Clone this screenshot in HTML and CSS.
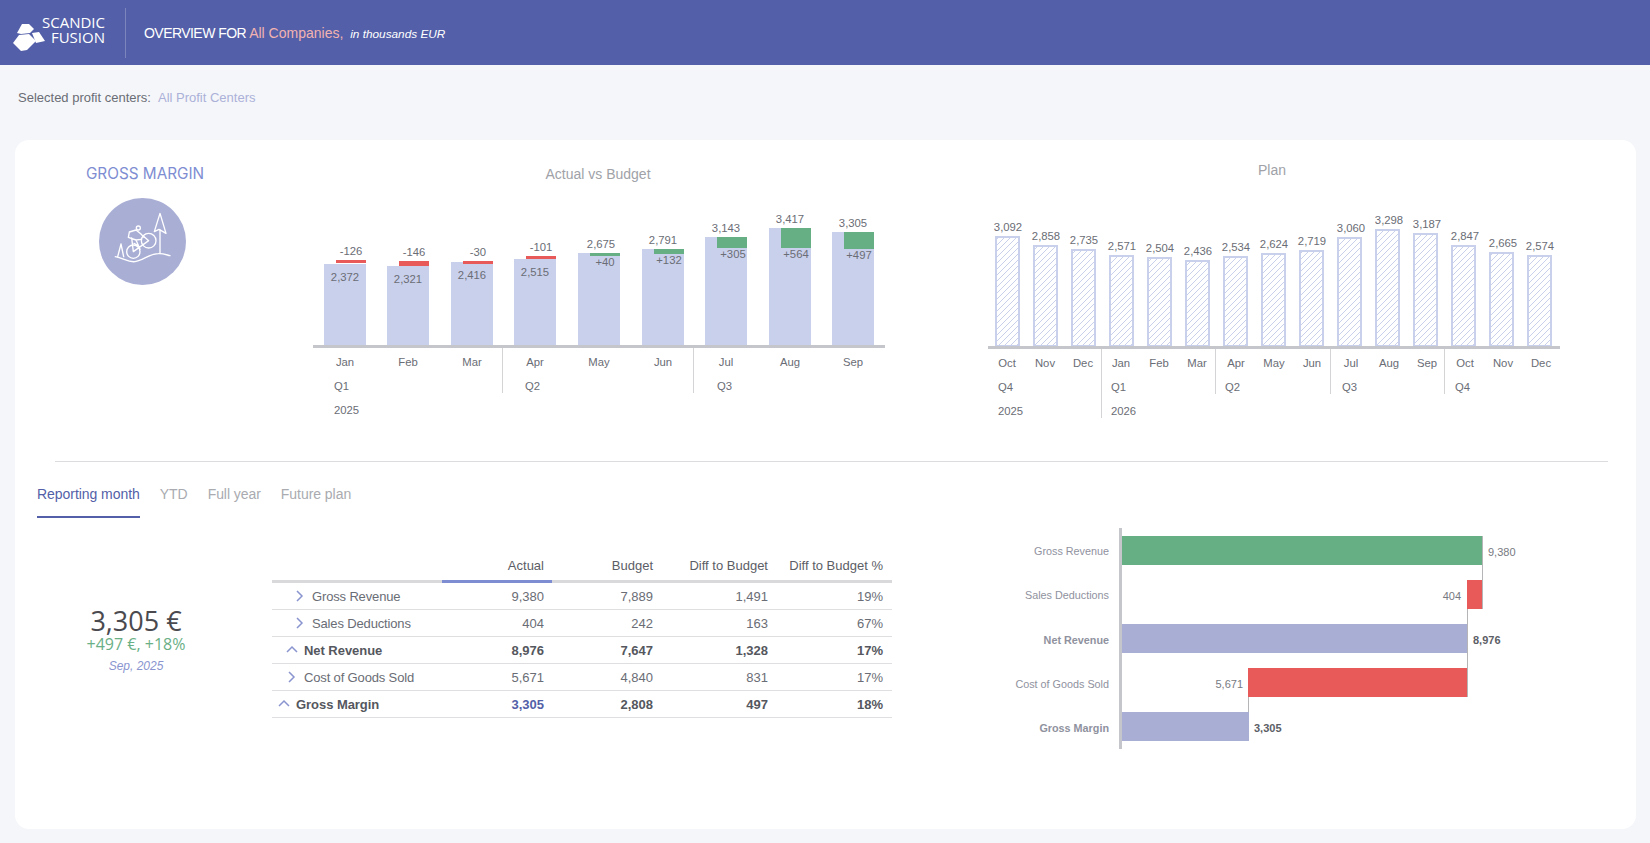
FILE: index.html
```html
<!DOCTYPE html>
<html lang="en">
<head>
<meta charset="utf-8">
<title>Gross Margin Overview</title>
<link rel="stylesheet" href="styles.css">
</head>
<body>
<header class="topbar">
  <div class="logo">
    <svg class="logo-mark" viewBox="0 0 48 56" aria-hidden="true">
      <polygon points="19,35 29,34 36,41 27,50 21,51 13,43"/>
      <polygon points="22,24 29,24 34,29 30,33 21,34 17,33"/>
      <polygon points="32,33 39,32 45,41 36,43"/>
    </svg>
    <div class="logo-text"><span>SCANDIC</span><span>FUSION</span></div>
  </div>
  <div class="title"><span class="title-main">OVERVIEW FOR</span> <span class="title-accent">All Companies,</span> <em class="title-unit">in thousands EUR</em></div>
</header>

<div class="filter"><span>Selected profit centers:</span><span class="filter-value">All Profit Centers</span></div>

<main class="card">
  <section class="top">
    <div class="identity">
      <h2 class="identity-title">GROSS MARGIN</h2>
      <svg class="identity-icon" viewBox="117 144 261 261" aria-hidden="true">
        <circle cx="247.5" cy="274.5" r="130.5" fill="#a9aed5"/>
        <g fill="none" stroke="#fff" stroke-width="4" stroke-linecap="round" stroke-linejoin="round">
          <path d="M166 320 C190 324 205 338 225 335 C250 330 268 312 295 311 C308 310 318 314 330 317"/>
          <path d="M300 190 L283 245 L297 238 L318 250 Z"/>
          <path d="M300 240 V310"/>
          <path d="M183 282 L173 320 M183 282 L191 320"/>
          <circle cx="220" cy="305" r="20"/>
          <circle cx="266" cy="272" r="22"/>
          <circle cx="235" cy="234" r="6"/>
          <path d="M208 246 L228 240 L243 252 L252 262 M208 246 L205 262 L228 270 L240 298 M215 264 L220 305 L266 272 L250 258 M228 270 L244 268 M222 280 L240 290"/>
        </g>
      </svg>
    </div>

    <figure class="chart chart-actual">
      <figcaption class="chart-title">Actual vs Budget</figcaption>
      <svg class="chart-svg-actual" viewBox="296 184 604 240">
        <g class="bar-base">
          <rect x="324" y="264" width="42" height="81"/>
          <rect x="387" y="266" width="42" height="79"/>
          <rect x="451" y="262" width="42" height="83"/>
          <rect x="514" y="259" width="42" height="86"/>
          <rect x="578" y="253" width="42" height="92"/>
          <rect x="642" y="249" width="42" height="96"/>
          <rect x="705" y="237" width="42" height="108"/>
          <rect x="769" y="228" width="42" height="117"/>
          <rect x="832" y="232" width="42" height="113"/>
        </g>
        <g class="bar-neg">
          <rect x="336" y="260" width="30" height="3"/>
          <rect x="399" y="261" width="30" height="5"/>
          <rect x="463" y="261" width="30" height="3"/>
          <rect x="526" y="256" width="30" height="3"/>
        </g>
        <g class="bar-pos">
          <rect x="590" y="253" width="30" height="3"/>
          <rect x="654" y="249" width="30" height="5"/>
          <rect x="717" y="237" width="30" height="11"/>
          <rect x="781" y="228" width="30" height="20"/>
          <rect x="844" y="232" width="30" height="17"/>
        </g>
        <rect class="axis" x="313" y="345" width="572" height="3"/>
        <g class="sep">
          <line x1="502.5" y1="348" x2="502.5" y2="393"/>
          <line x1="693.5" y1="348" x2="693.5" y2="393"/>
        </g>
        <g class="lbl">
          <text x="351" y="251">-126</text><text x="414" y="252">-146</text><text x="478" y="252">-30</text><text x="541" y="247">-101</text>
          <text x="601" y="244">2,675</text><text x="663" y="240">2,791</text><text x="726" y="228">3,143</text><text x="790" y="219">3,417</text><text x="853" y="223">3,305</text>
          <text x="345" y="277">2,372</text><text x="408" y="279">2,321</text><text x="472" y="275">2,416</text><text x="535" y="272">2,515</text>
          <text x="605" y="262">+40</text><text x="669" y="260">+132</text><text x="733" y="254">+305</text><text x="796" y="254">+564</text><text x="859" y="255">+497</text>
          <text x="345" y="362">Jan</text><text x="408" y="362">Feb</text><text x="472" y="362">Mar</text><text x="535" y="362">Apr</text><text x="599" y="362">May</text><text x="663" y="362">Jun</text><text x="726" y="362">Jul</text><text x="790" y="362">Aug</text><text x="853" y="362">Sep</text>
        </g>
        <g class="lbl-start">
          <text x="334" y="386">Q1</text><text x="525" y="386">Q2</text><text x="717" y="386">Q3</text><text x="334" y="410">2025</text>
        </g>
      </svg>
    </figure>

    <figure class="chart chart-plan">
      <figcaption class="chart-title">Plan</figcaption>
      <svg class="chart-svg-plan" viewBox="980 180 584 244">
        <defs>
          <pattern id="hatch" patternUnits="userSpaceOnUse" width="6" height="6">
            <path d="M-1 1 L1 -1 M0 6 L6 0 M5 7 L7 5" stroke="#c9d0ec" stroke-width="1"/>
          </pattern>
        </defs>
        <g class="bar-plan">
          <rect x="996" y="237" width="23" height="109"/>
          <rect x="1034" y="246" width="23" height="100"/>
          <rect x="1072" y="250" width="23" height="96"/>
          <rect x="1110" y="256" width="23" height="90"/>
          <rect x="1148" y="258" width="23" height="88"/>
          <rect x="1186" y="261" width="23" height="85"/>
          <rect x="1224" y="257" width="23" height="89"/>
          <rect x="1262" y="254" width="23" height="92"/>
          <rect x="1300" y="251" width="23" height="95"/>
          <rect x="1338" y="238" width="23" height="108"/>
          <rect x="1376" y="230" width="23" height="116"/>
          <rect x="1414" y="234" width="23" height="112"/>
          <rect x="1452" y="246" width="23" height="100"/>
          <rect x="1490" y="253" width="23" height="93"/>
          <rect x="1528" y="256" width="23" height="90"/>
        </g>
        <rect class="axis" x="988" y="346" width="572" height="3"/>
        <g class="sep">
          <line x1="1101.5" y1="349" x2="1101.5" y2="418"/>
          <line x1="1215.5" y1="349" x2="1215.5" y2="394"/>
          <line x1="1330.5" y1="349" x2="1330.5" y2="394"/>
          <line x1="1444.5" y1="349" x2="1444.5" y2="394"/>
        </g>
        <g class="lbl">
          <text x="1008" y="227">3,092</text><text x="1046" y="236">2,858</text><text x="1084" y="240">2,735</text><text x="1122" y="246">2,571</text><text x="1160" y="248">2,504</text><text x="1198" y="251">2,436</text><text x="1236" y="247">2,534</text><text x="1274" y="244">2,624</text><text x="1312" y="241">2,719</text><text x="1351" y="228">3,060</text><text x="1389" y="220">3,298</text><text x="1427" y="224">3,187</text><text x="1465" y="236">2,847</text><text x="1503" y="243">2,665</text><text x="1540" y="246">2,574</text>
          <text x="1007" y="363">Oct</text><text x="1045" y="363">Nov</text><text x="1083" y="363">Dec</text><text x="1121" y="363">Jan</text><text x="1159" y="363">Feb</text><text x="1197" y="363">Mar</text><text x="1236" y="363">Apr</text><text x="1274" y="363">May</text><text x="1312" y="363">Jun</text><text x="1351" y="363">Jul</text><text x="1389" y="363">Aug</text><text x="1427" y="363">Sep</text><text x="1465" y="363">Oct</text><text x="1503" y="363">Nov</text><text x="1541" y="363">Dec</text>
        </g>
        <g class="lbl-start">
          <text x="998" y="387">Q4</text><text x="1111" y="387">Q1</text><text x="1225" y="387">Q2</text><text x="1342" y="387">Q3</text><text x="1455" y="387">Q4</text>
          <text x="998" y="411">2025</text><text x="1111" y="411">2026</text>
        </g>
      </svg>
    </figure>
  </section>

  <hr class="divider">

  <nav class="tabs">
    <a class="tab tab-active">Reporting month</a>
    <a class="tab">YTD</a>
    <a class="tab">Full year</a>
    <a class="tab">Future plan</a>
  </nav>

  <section class="bottom">
    <div class="kpi">
      <div class="kpi-value">3,305 €</div>
      <div class="kpi-delta">+497 €, +18%</div>
      <div class="kpi-date">Sep, 2025</div>
    </div>

    <table class="grid">
      <colgroup><col class="c-label"><col class="c-actual"><col class="c-budget"><col class="c-diff"><col class="c-pct"></colgroup>
      <thead>
        <tr><th></th><th class="th-actual">Actual</th><th>Budget</th><th>Diff to Budget</th><th class="pct">Diff to Budget %</th></tr>
      </thead>
      <tbody>
        <tr>
          <td><div class="row-label lvl-2"><svg class="chev" viewBox="0 0 12 12"><path d="M3 1 L8 6 L3 11"/></svg>Gross Revenue</div></td>
          <td>9,380</td><td>7,889</td><td>1,491</td><td class="pct">19%</td>
        </tr>
        <tr>
          <td><div class="row-label lvl-2"><svg class="chev" viewBox="0 0 12 12"><path d="M3 1 L8 6 L3 11"/></svg>Sales Deductions</div></td>
          <td>404</td><td>242</td><td>163</td><td class="pct">67%</td>
        </tr>
        <tr class="strong">
          <td><div class="row-label lvl-1"><svg class="chev" viewBox="0 0 12 12"><path d="M1 8 L6 3 L11 8"/></svg>Net Revenue</div></td>
          <td>8,976</td><td>7,647</td><td>1,328</td><td class="pct">17%</td>
        </tr>
        <tr>
          <td><div class="row-label lvl-1"><svg class="chev" viewBox="0 0 12 12"><path d="M3 1 L8 6 L3 11"/></svg>Cost of Goods Sold</div></td>
          <td>5,671</td><td>4,840</td><td>831</td><td class="pct">17%</td>
        </tr>
        <tr class="strong">
          <td><div class="row-label lvl-0"><svg class="chev" viewBox="0 0 12 12"><path d="M1 8 L6 3 L11 8"/></svg>Gross Margin</div></td>
          <td class="accent">3,305</td><td>2,808</td><td>497</td><td class="pct">18%</td>
        </tr>
      </tbody>
    </table>

    <svg class="bridge" viewBox="1000 520 600 240">
      <g class="connector">
        <line x1="1482.5" y1="536" x2="1482.5" y2="609"/>
        <line x1="1467.5" y1="609" x2="1467.5" y2="697"/>
        <line x1="1248.5" y1="697" x2="1248.5" y2="712"/>
      </g>
      <rect class="fill-pos" x="1121" y="536" width="361" height="29"/>
      <rect class="fill-neg" x="1467" y="580" width="15" height="29"/>
      <rect class="fill-total" x="1121" y="624" width="346" height="29"/>
      <rect class="fill-neg" x="1248" y="668" width="219" height="29"/>
      <rect class="fill-total" x="1121" y="712" width="128" height="29"/>
      <rect class="axis" x="1119" y="528" width="3" height="221"/>
      <g class="cat">
        <text x="1109" y="551">Gross Revenue</text>
        <text x="1109" y="595">Sales Deductions</text>
        <text class="b" x="1109" y="640">Net Revenue</text>
        <text x="1109" y="684">Cost of Goods Sold</text>
        <text class="b" x="1109" y="728">Gross Margin</text>
      </g>
      <g class="val">
        <text x="1488" y="552">9,380</text>
        <text class="end" x="1461" y="596">404</text>
        <text class="b" x="1473" y="640">8,976</text>
        <text class="end" x="1243" y="684">5,671</text>
        <text class="b" x="1254" y="728">3,305</text>
      </g>
    </svg>
  </section>
</main>
</body>
</html>
```
FILE: styles.css
```css
* { box-sizing: border-box; }
html, body { margin: 0; padding: 0; }
body {
  background: #f5f6fa;
  font-family: "Liberation Sans", Arial, sans-serif;
  color: #5c5e66;
  height: 843px;
  overflow: hidden;
}
.topbar {
  height: 65px;
  background: #535fa8;
  display: flex;
  align-items: center;
  color: #fff;
}
.logo {
  width: 126px;
  height: 50px;
  display: flex;
  border-right: 1px solid #7c86bd;
  margin-top: 1px;
}
.logo-mark { width: 48px; height: 56px; fill: #fff; margin-top: -8px; flex: none; }
.logo-text {
  display: flex;
  flex-direction: column;
  align-items: flex-end;
  font-family: "Open Sans", sans-serif;
  font-size: 15px;
  font-weight: 500;
  line-height: 15px;
  width: 57px;
  margin-top: 7px;
  white-space: nowrap;
}
.title { margin-left: 18px; font-size: 14px; white-space: nowrap; }
.title-main { letter-spacing: -0.55px; }
.title-accent { color: #f2b3b0; }
.title-unit { font-size: 11.8px; margin-left: 3px; }

.filter {
  height: 75px;
  padding: 0 18px 10px;
  display: flex;
  gap: 7px;
  align-items: center;
  font-size: 13px;
  color: #6a6d75;
}
.filter-value { color: #abb1d8; }

.card {
  margin: 0 14px 0 15px;
  height: 689px;
  background: #fff;
  border-radius: 14px;
}
.top { height: 321px; display: flex; }
.identity {
  width: 255px;
  flex: none;
  padding-top: 24px;
  display: flex;
  flex-direction: column;
  align-items: center;
}
.identity-title {
  margin: 0 0 14px 5px;
  font-family: Inter, sans-serif;
  font-size: 15.3px;
  line-height: 20px;
  font-weight: 400;
  color: #7e8dd2;
  white-space: nowrap;
}
.identity-icon { width: 87px; height: 87px; }

.chart { margin: 0; flex: none; }
.chart-actual { margin-left: 26px; width: 604px; padding-top: 24px; }
.chart-plan { margin-left: 80px; width: 584px; padding-top: 20px; }
.chart-title {
  text-align: center;
  font-size: 14px;
  line-height: 20px;
  color: #a0a2a8;
}
.chart-svg-actual { display: block; width: 604px; height: 240px; }
.chart-svg-plan { display: block; width: 584px; height: 244px; }

.bar-base rect { fill: #c9d0ec; }
.bar-neg rect { fill: #e85a5a; }
.bar-pos rect { fill: #66af85; }
.bar-plan rect { fill: url(#hatch); stroke: #c9d0ec; stroke-width: 2; }
.axis { fill: #c5c6cc; }
.sep line { stroke: #d4d4d6; stroke-width: 1; }
.lbl, .lbl-start, .cat, .val { transform: translateY(1px); }
.lbl text, .lbl-start text, .cat text, .val text {
  font-family: "Liberation Sans", Arial, sans-serif;
  font-size: 11.3px;
  dominant-baseline: middle;
  fill: #6a6d75;
}
.lbl text { text-anchor: middle; }
.lbl-start text { text-anchor: start; }
.cat text { text-anchor: end; fill: #8f929e; font-size: 10.8px; }
.val text { font-size: 11px; fill: #777a82; }
.cat .b, .val .b { font-weight: 700; }
.val .b { fill: #5c5e66; }
.val .end { text-anchor: end; }
.fill-pos { fill: #66af85; }
.fill-neg { fill: #e85a5a; }
.fill-total { fill: #a9aed5; }
.connector line { stroke: #b5b5b8; stroke-width: 1; }

.divider {
  margin: 0 28px 0 40px;
  height: 1px;
  border: 0;
  background: #dcdcdf;
}
.tabs {
  display: flex;
  gap: 20px;
  margin-top: 22px;
  padding-left: 22px;
  font-size: 14px;
}
.tab {
  line-height: 20px;
  padding-bottom: 12px;
  border-bottom: 2px solid transparent;
  color: #a9abb0;
  letter-spacing: -0.05px;
}
.tab-active { color: #535fa8; border-bottom-color: #535fa8; }

.bottom { display: flex; padding-top: 2px; }
.kpi {
  width: 242px;
  flex: none;
  padding-top: 85px;
  text-align: center;
}
.kpi-value {
  font-family: "Open Sans", sans-serif;
  font-size: 27px;
  line-height: 31px;
  color: #4a4a4f;
}
.kpi-delta {
  margin-top: -1px;
  font-family: "Open Sans", sans-serif;
  font-size: 16px;
  line-height: 18px;
  color: #6aaf85;
}
.kpi-date {
  margin-top: 6px;
  font-size: 12px;
  line-height: 14px;
  font-style: italic;
  color: #8a95d0;
}

.grid {
  margin: 30px 0 0 15px;
  width: 620px;
  height: 168px;
  table-layout: fixed;
  border-collapse: separate;
  border-spacing: 0;
  font-size: 13px;
  flex: none;
}
.c-label { width: 170px; }
.c-actual { width: 110px; }
.c-budget { width: 109px; }
.c-diff { width: 115px; }
.c-pct { width: 116px; }
.grid th {
  height: 33px;
  padding: 0 8px 0 0;
  text-align: right;
  font-weight: 400;
  color: #5c5e66;
  border-bottom: 3px solid #d9d9db;
}
.grid th.th-actual { border-bottom-color: #7e8dd2; }
.grid td {
  height: 27px;
  padding: 0 8px 0 0;
  text-align: right;
  color: #6a6d75;
  border-bottom: 1px solid #dfdfe1;
}
.grid .pct { padding-right: 9px; }
.strong td { font-weight: 700; color: #55575e; }
.grid td.accent { color: #535fa8; }
.row-label { display: flex; align-items: center; text-align: left; white-space: nowrap; letter-spacing: -0.15px; }
.strong .row-label { letter-spacing: -0.05px; }
.lvl-2 { padding-left: 22px; }
.lvl-1 { padding-left: 14px; }
.lvl-0 { padding-left: 6px; }
.chev {
  width: 12px;
  height: 12px;
  flex: none;
  margin-right: 6px;
  fill: none;
  stroke: #8a95d0;
  stroke-width: 1.5;
}
.bridge { display: block; flex: none; margin-left: 108px; width: 600px; height: 240px; }
```
